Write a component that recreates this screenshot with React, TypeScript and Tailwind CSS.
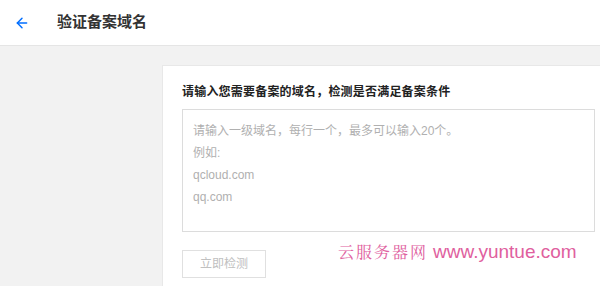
import { ArrowLeft } from 'lucide-react';

const font = { fontFamily: '"Liberation Sans", "Noto Sans CJK SC", sans-serif' };

export default function App() {
  return (
    <div className="w-[600px] h-[286px] overflow-hidden bg-[#f2f2f2] flex flex-col" style={font}>
      {/* Header */}
      <div className="h-[46px] shrink-0 bg-white border-b border-[#e5e5e5] flex items-center">
        <ArrowLeft className="ml-[14px] w-4 h-4 text-[#006eff]" strokeWidth={2.2} />
        <h1 className="ml-[27px] text-[15px] font-bold text-[#333]">验证备案域名</h1>
      </div>

      {/* Body */}
      <div className="flex-1 pl-[162px] pt-[19px]">
        <div className="h-full bg-white border-l border-t border-[#e8e8e8] pl-[19px] pr-[5px] pt-[17px]">
          <p className="text-[12px] font-bold text-[#222] leading-[18px] tracking-[0.2px]">
            请输入您需要备案的域名，检测是否满足备案条件
          </p>
          <div className="mt-[8px] h-[123px] border border-[#dcdcdc] px-[10px] pt-[10px] text-[12px] leading-[22px] text-[#b0b0b0]">
            <p>请输入一级域名，每行一个，最多可以输入20个。</p>
            <p>例如:</p>
            <p>qcloud.com</p>
            <p>qq.com</p>
          </div>
          <div className="mt-[18px] flex items-start">
            <button
              type="button"
              className="w-[84px] h-[28px] shrink-0 border border-[#e0e0e0] text-[12px] text-[#c0c0c0] bg-white"
            >
              立即检测
            </button>
            <div className="ml-[72px] -mt-[12px] flex items-baseline whitespace-nowrap text-[#e0609e]">
              <span
                className="text-[16px] tracking-[2px]"
                style={{ fontFamily: '"Noto Serif CJK SC", "Noto Sans CJK SC", serif' }}
              >
                云服务器网
              </span>
              <span className="ml-[5px] text-[19px]">www.yuntue.com</span>
            </div>
          </div>
        </div>
      </div>
    </div>
  );
}
